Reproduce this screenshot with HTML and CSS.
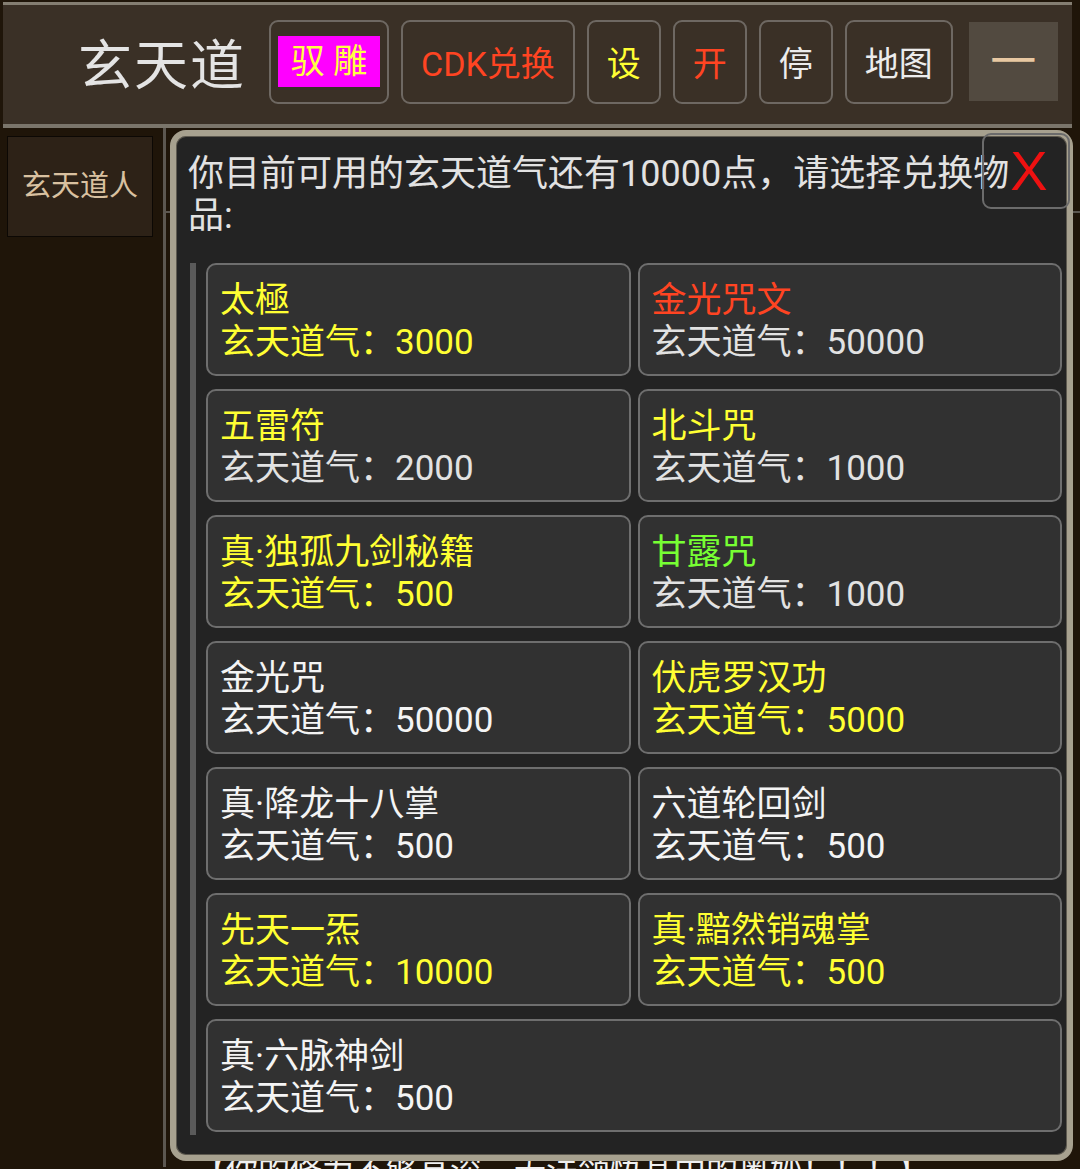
FILE: index.html
```html
<!DOCTYPE html>
<html lang="zh">

<head>
    <meta charset="UTF-8">
    <meta name="viewport" content="width=device-width, initial-scale=1.0">
    <title>玄天道</title>
    <link rel="stylesheet" href="styles.css">
</head>

<body>
    <!-- 顶部菜单 -->
    <div class="topbar">
        <h1 class="title">玄天道</h1>
        <div class="btn"><span class="mount">驭 雕</span></div>
        <div class="btn red">CDK兑换</div>
        <div class="btn yellow">设</div>
        <div class="btn red">开</div>
        <div class="btn white">停</div>
        <div class="btn white">地图</div>
        <div class="fold">一</div>
    </div>

    <div class="layout">
        <div class="side">
            <div class="side-item">玄天道人</div>
        </div>
        <div class="main">
            <div class="main-head"></div>
            <p class="log">【你的修为不够高深，无法领悟其中的奥妙！！！】</p>

            <!-- 兑换弹窗 -->
            <div class="dialog">
                <div class="close">X</div>
                <p class="tip">你目前可用的玄天道气还有10000点，请选择兑换物品:</p>
                <ul class="goods">
                    <li class="all-yellow"><span>太極</span><span>玄天道气：3000</span></li>
                    <li><span class="red">金光咒文</span><span>玄天道气：50000</span></li>
                    <li><span class="yellow">五雷符</span><span>玄天道气：2000</span></li>
                    <li><span class="yellow">北斗咒</span><span>玄天道气：1000</span></li>
                    <li class="all-yellow"><span>真·独孤九剑秘籍</span><span>玄天道气：500</span></li>
                    <li><span class="green">甘露咒</span><span>玄天道气：1000</span></li>
                    <li class="all-white"><span>金光咒</span><span>玄天道气：50000</span></li>
                    <li class="all-yellow"><span>伏虎罗汉功</span><span>玄天道气：5000</span></li>
                    <li class="all-white"><span>真·降龙十八掌</span><span>玄天道气：500</span></li>
                    <li class="all-white"><span>六道轮回剑</span><span>玄天道气：500</span></li>
                    <li class="all-yellow"><span>先天一炁</span><span>玄天道气：10000</span></li>
                    <li class="all-yellow"><span>真·黯然销魂掌</span><span>玄天道气：500</span></li>
                    <li class="all-white wide"><span>真·六脉神剑</span><span>玄天道气：500</span></li>
                </ul>
            </div>
        </div>
    </div>
</body>

</html>
```

FILE: styles.css
```css
* {
    padding: 0;
    margin: 0;
    box-sizing: border-box;
}

body {
    background: #1f1509;
    font-family: Roboto, "Noto Sans CJK SC", sans-serif;
    width: 1080px;
    height: 1169px;
    overflow: hidden;
}

/* 顶部 */
.topbar {
    display: flex;
    align-items: center;
    margin: 2px 8px 0 3px;
    height: 126px;
    background: #3a3026;
    border-top: 3px solid #847e72;
    border-bottom: 4px solid #7a756b;
    padding-left: 75px;
    padding-bottom: 6px;
}

.topbar .title {
    font-size: 54px;
    font-weight: normal;
    color: #e4e4e4;
    letter-spacing: 2px;
    margin-right: 23px;
}

.topbar .btn {
    height: 84px;
    border: 2px solid #6e6862;
    border-radius: 9px;
    padding: 0 18px;
    display: flex;
    align-items: center;
    font-size: 34px;
    margin-right: 12px;
}

.topbar .btn:first-of-type {
    padding: 0 7px;
}

.topbar .mount {
    display: block;
    width: 102px;
    height: 51px;
    line-height: 51px;
    text-align: center;
    background: #ff00ff;
    color: #ffff44;
}

.topbar .red {
    color: #ff4422;
}

.topbar .yellow {
    color: #ffff33;
}

.topbar .white {
    color: #ececec;
}

.topbar .fold {
    width: 89px;
    height: 79px;
    margin-left: 4px;
    background: #524a40;
    color: #e8c8a2;
    font-size: 46px;
    line-height: 79px;
    text-align: center;
}

/* 下方 */
.layout {
    display: flex;
    height: 1039px;
}

.side {
    width: 166px;
    border-right: 3px solid #5c5750;
    padding: 8px 0 0 7px;
}

.side-item {
    width: 146px;
    height: 101px;
    background: #2d2217;
    border: 1px solid #0c0804;
    color: #d9c1a0;
    font-size: 29px;
    line-height: 99px;
    text-align: center;
}

.main {
    flex: 1;
    position: relative;
}

.main-head {
    height: 85px;
    border-bottom: 2px solid #5c5750;
}

.log {
    margin-top: 938px;
    padding-left: 28px;
    font-size: 32px;
    line-height: 40px;
    color: #f0f0f0;
}

/* 弹窗 */
.dialog {
    position: absolute;
    left: 4px;
    top: 2px;
    width: 903px;
    height: 1031px;
    background: #232323;
    border: 6px solid #a7a18f;
    border-radius: 16px;
    box-shadow: inset 0 0 0 1px #5e5a50;
    padding: 17px 5px 0 12px;
}

.dialog .close {
    position: absolute;
    top: -3px;
    right: -3px;
    width: 88px;
    height: 76px;
    border: 2px solid #6b6b6b;
    border-radius: 9px;
    color: #ee1111;
    font-family: "Liberation Sans", sans-serif;
    font-size: 56px;
    line-height: 72px;
    text-align: center;
    padding-left: 6px;
}

.dialog .tip {
    font-size: 36px;
    line-height: 42px;
    color: #e2e2e2;
    padding-right: 30px;
}

.goods {
    list-style-type: none;
    margin: 26px 0 0 2px;
    border-left: 6px solid #5a5a5a;
    padding: 0 0 3px 10px;
    display: grid;
    grid-template-columns: 1fr 1fr;
    column-gap: 7px;
    row-gap: 13px;
}

.goods li {
    height: 113px;
    background: #313131;
    border: 2px solid #6e6e6e;
    border-radius: 10px;
    padding: 15px 0 0 12px;
    font-size: 35px;
    line-height: 42px;
    color: #e2e2e2;
}

.goods li span {
    display: block;
}

.goods li.wide {
    grid-column: span 2;
}

.goods .all-yellow,
.goods .yellow {
    color: #ffff33;
}

.goods .all-white {
    color: #f4f4f4;
}

.goods .red {
    color: #ff4422;
}

.goods .green {
    color: #77ff33;
}
```
